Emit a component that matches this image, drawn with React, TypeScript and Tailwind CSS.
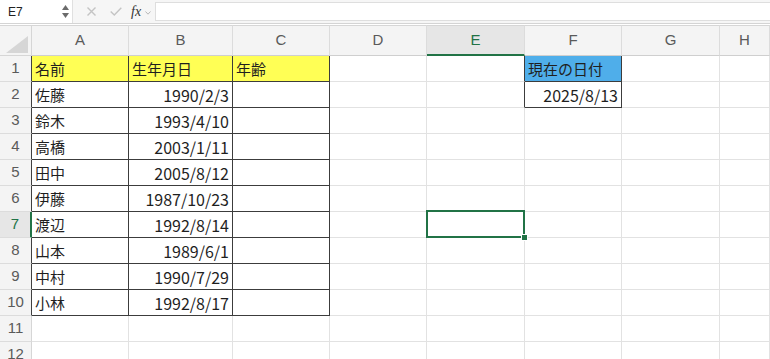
import React from "react";

const FONT = { fontFamily: "'Noto Sans CJK JP', 'Liberation Sans', sans-serif" };

const COLS = ["A", "B", "C", "D", "E", "F", "G", "H"];

const people: [string, string][] = [
  ["佐藤", "1990/2/3"],
  ["鈴木", "1993/4/10"],
  ["高橋", "2003/1/11"],
  ["田中", "2005/8/12"],
  ["伊藤", "1987/10/23"],
  ["渡辺", "1992/8/14"],
  ["山本", "1989/6/1"],
  ["中村", "1990/7/29"],
  ["小林", "1992/8/17"],
];

// r: 1..12, c: 1..8 (A..H)
function cellContent(r: number, c: number): { text?: string; right?: boolean; bg?: string } {
  if (r === 1) {
    if (c === 1) return { text: "名前", bg: "bg-[#ffff55]" };
    if (c === 2) return { text: "生年月日", bg: "bg-[#ffff55]" };
    if (c === 3) return { text: "年齢", bg: "bg-[#ffff55]" };
    if (c === 6) return { text: "現在の日付", bg: "bg-[#4faeea]" };
  }
  if (r === 2 && c === 6) return { text: "2025/8/13", right: true };
  if (r >= 2 && r <= 10) {
    const p = people[r - 2];
    if (c === 1) return { text: p[0] };
    if (c === 2) return { text: p[1], right: true };
  }
  return {};
}

function inTable(r: number, c: number) {
  return (r >= 1 && r <= 10 && c >= 1 && c <= 3) || (r >= 1 && r <= 2 && c === 6);
}

function Toolbar() {
  return (
    <div className="flex h-[24px] items-stretch border-b border-[#d4d4d4] bg-[#f6f6f6]">
      {/* name box */}
      <div className="relative flex w-[73px] items-center border-r border-[#e0e0e0] bg-white pl-[8px] text-[12px] text-[#222]" style={{ fontFamily: "'Liberation Sans', sans-serif" }}>
        E7
        <div className="absolute right-[3px] top-[5px] flex flex-col items-center gap-[3px]">
          <svg width="7" height="5" viewBox="0 0 7 5"><path d="M0 5 L3.5 0 L7 5 Z" fill="#6b6b6b" /></svg>
          <svg width="7" height="5" viewBox="0 0 7 5"><path d="M0 0 L3.5 5 L7 0 Z" fill="#6b6b6b" /></svg>
        </div>
      </div>
      <div className="flex w-[82px] items-center pl-[14px]">
        <svg width="9" height="9" viewBox="0 0 9 9" className="mr-[14px]">
          <path d="M0.5 0.5 L8.5 8.5 M8.5 0.5 L0.5 8.5" stroke="#c4c4c4" strokeWidth="1.4" />
        </svg>
        <svg width="12" height="9" viewBox="0 0 12 9" className="mr-[9px]">
          <path d="M0.7 4.5 L4.3 8 L11.3 0.8" stroke="#c4c4c4" strokeWidth="1.4" fill="none" />
        </svg>
        <span className="text-[14px] italic text-[#333]" style={{ fontFamily: "'Liberation Serif', serif" }}>fx</span>
        <svg width="6" height="4" viewBox="0 0 6 4" className="ml-[4px] mt-[2px]">
          <path d="M0.5 0.5 L3 3.2 L5.5 0.5" stroke="#b8b8b8" strokeWidth="1" fill="none" />
        </svg>
      </div>
      <div className="my-[2px] flex-1 border-y border-l border-[#dedede] bg-white" />
    </div>
  );
}

export default function App() {
  const rows = Array.from({ length: 12 }, (_, i) => i + 1);
  return (
    <div className="h-[359px] w-[770px] overflow-hidden bg-white" style={FONT}>
      <Toolbar />
      <div className="h-[1px] bg-white" />
      <div className="grid grid-cols-[32px_97px_104px_97px_97px_98px_97px_98px_1fr] grid-rows-[31px_repeat(12,26px)]">
        {/* corner */}
        <div className="relative border-t border-r border-b border-[#d6d6d6] border-r-[#d6d6d6] bg-[#f4f4f4]">
          <svg width="22" height="17" viewBox="0 0 22 17" className="absolute right-[3px] bottom-[2px]">
            <path d="M22 0 L22 17 L0 17 Z" fill="#d6d6d6" />
          </svg>
        </div>
        {COLS.map((col) => (
          <div
            key={col}
            className={
              "flex items-center justify-center border-t border-r border-t-[#d6d6d6] border-r-[#dcdcdc] text-[15px] " +
              (col === "E"
                ? "border-b-2 border-b-[#217346] bg-[#e6e6e6] text-[#217346]"
                : "border-b border-b-[#cfcfcf] bg-[#f4f4f4] text-[#5a5a5a]")
            }
            style={{ fontFamily: "'Liberation Sans', sans-serif" }}
          >
            {col}
          </div>
        ))}

        {rows.map((r) => (
          <React.Fragment key={r}>
            <div
              className={
                "flex items-center justify-center border-b border-b-[#dcdcdc] text-[15px] " +
                (r === 7
                  ? "border-r-2 border-r-[#217346] bg-[#e6e6e6] text-[#217346]"
                  : r <= 10
                  ? "border-r border-r-[#404040] bg-[#f4f4f4] text-[#5a5a5a]"
                  : "border-r border-r-[#d6d6d6] bg-[#f4f4f4] text-[#5a5a5a]")
              }
              style={{ fontFamily: "'Liberation Sans', sans-serif" }}
            >
              {r}
            </div>
            {COLS.map((_, ci) => {
              const c = ci + 1;
              const { text, right, bg } = cellContent(r, c);
              const rightDark = inTable(r, c) || inTable(r, c + 1);
              const bottomDark = inTable(r, c) || inTable(r + 1, c);
              return (
                <div
                  key={c}
                  className={
                    "relative flex items-end overflow-visible whitespace-nowrap border-r border-b px-[3px] pb-[2px] leading-[20px] text-[#1f1f1f] " +
                    (rightDark ? "border-r-[#3c3c3c] " : "border-r-[#e2e2e2] ") +
                    (bottomDark ? "border-b-[#3c3c3c] " : "border-b-[#e2e2e2] ") +
                    (right ? "justify-end text-[16px] " : "justify-start text-[15px] ") +
                    (bg ?? "")
                  }
                >
                  {text}
                  {r === 7 && c === 5 && (
                    <div className="pointer-events-none absolute -left-[1px] -top-[2px] -right-[1px] -bottom-[1px] z-10 border-2 border-[#217346]">
                      <div className="absolute -right-[5px] -bottom-[5px] h-[7px] w-[7px] border border-white bg-[#217346]" />
                    </div>
                  )}
                </div>
              );
            })}
          </React.Fragment>
        ))}
      </div>
    </div>
  );
}
